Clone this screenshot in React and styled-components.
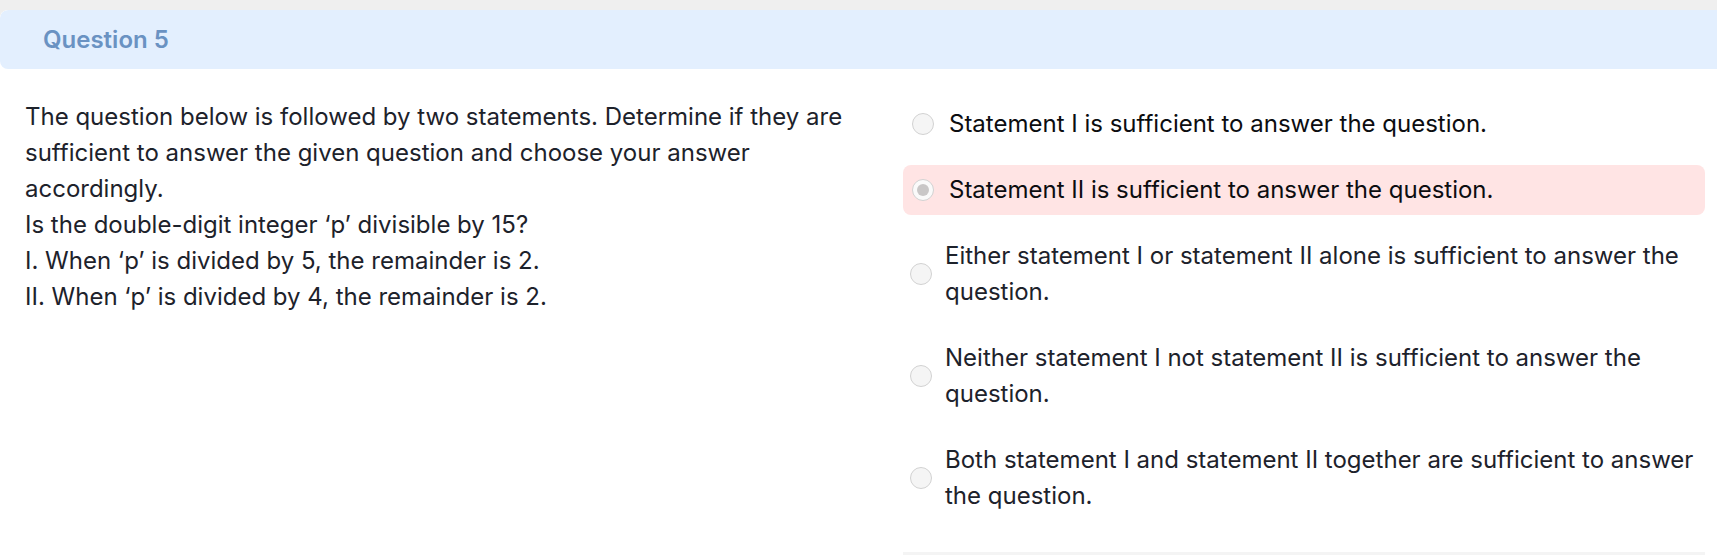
import React from 'react'
import styled, { createGlobalStyle } from 'styled-components'

const GlobalStyle = createGlobalStyle`
  html, body {
    margin: 0;
    padding: 0;
    background: #efefef;
    font-family: Inter, "Noto Sans", sans-serif;
  }
`

const Page = styled.div`
  padding-top: 10px;
  overflow: hidden;
`

const Card = styled.section`
  background: #fff;
  border-radius: 8px 0 0 0;
  height: 545px;
  overflow: hidden;
`

const Header = styled.header`
  height: 59px;
  display: flex;
  align-items: center;
  padding-left: 43px;
  background: #e3effe;
  border-radius: 8px 0 0 8px;
  color: #6a92c2;
  font-size: 24px;
  font-weight: 600;
`

const Body = styled.div`
  display: flex;
  align-items: flex-start;
  padding: 30px 12px 0 25px;
  gap: 33px;
`

const Prompt = styled.div`
  width: 845px;
  flex-shrink: 0;
  color: #1d222b;
  font-size: 24px;
  line-height: 36px;

  p {
    margin: 0;
  }
`

const Options = styled.div`
  flex: 1;
  display: flex;
  flex-direction: column;
  gap: 16px;
`

const Option = styled.label`
  display: flex;
  align-items: center;
  padding: 7px 2px 7px ${(p) => (p.$long ? '7px' : '9px')};
  border-radius: 8px;
  background: ${(p) => (p.$selected ? '#ffe4e4' : 'transparent')};
  color: ${(p) => (p.$long ? '#1d222b' : '#0c0d10')};
  font-size: 24px;
  line-height: 36px;
`

const Radio = styled.span`
  flex-shrink: 0;
  width: 20px;
  height: 20px;
  margin-right: ${(p) => (p.$long ? '13px' : '15px')};
  border-radius: 50%;
  border: 1px solid #d2d2d2;
  background: ${(p) => (p.$checked ? '#fafafa' : '#f5f5f5')};
  display: flex;
  align-items: center;
  justify-content: center;

  &::after {
    content: '';
    display: ${(p) => (p.$checked ? 'block' : 'none')};
    width: 12px;
    height: 12px;
    border-radius: 50%;
    background: #c9c7c7;
  }
`

const Footer = styled.div`
  margin-top: 15px;
  height: 12px;
  background: #f4f4f4;
`

const options = [
  { text: 'Statement I is sufficient to answer the question.' },
  { text: 'Statement II is sufficient to answer the question.', selected: true },
  { text: 'Either statement I or statement II alone is sufficient to answer the question.', long: true },
  { text: 'Neither statement I not statement II is sufficient to answer the question.', long: true },
  { text: 'Both statement I and statement II together are sufficient to answer the question.', long: true },
]

const App = () => (
  <Page>
    <GlobalStyle />
    <Card>
      <Header>Question 5</Header>
      <Body>
        <Prompt>
          <p>
            The question below is followed by two statements. Determine if they are
            sufficient to answer the given question and choose your answer accordingly.
          </p>
          <p>Is the double-digit integer ‘p’ divisible by 15?</p>
          <p>I. When ‘p’ is divided by 5, the remainder is 2.</p>
          <p>II. When ‘p’ is divided by 4, the remainder is 2.</p>
        </Prompt>
        <Options>
          {options.map((o, i) => (
            <Option key={i} $selected={o.selected} $long={o.long}>
              <Radio $checked={o.selected} $long={o.long} />
              <span>{o.text}</span>
            </Option>
          ))}
          <Footer />
        </Options>
      </Body>
    </Card>
  </Page>
)

export default App
